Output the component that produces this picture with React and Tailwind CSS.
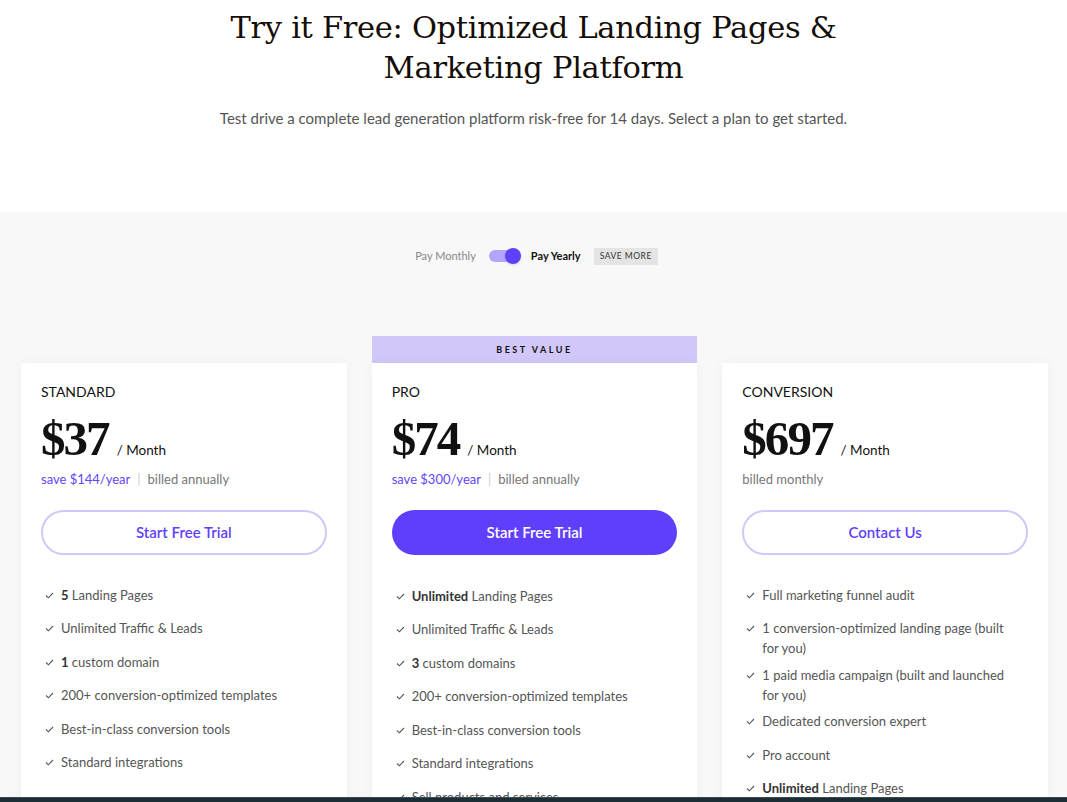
import React from 'react';

const serif = { fontFamily: '"DejaVu Serif", "Liberation Serif", serif' };
const priceSerif = { fontFamily: '"Liberation Serif", "DejaVu Serif", serif' };

const plans = [
  {
    name: 'STANDARD',
    price: '$37',
    save: 'save $144/year',
    billed: 'billed annually',
    cta: 'Start Free Trial',
    features: [
      [<b key="b" className="font-bold text-[#333]">5</b>, ' Landing Pages'],
      ['Unlimited Traffic & Leads'],
      [<b key="b" className="font-bold text-[#333]">1</b>, ' custom domain'],
      ['200+ conversion-optimized templates'],
      ['Best-in-class conversion tools'],
      ['Standard integrations'],
    ],
  },
  {
    name: 'PRO',
    price: '$74',
    save: 'save $300/year',
    billed: 'billed annually',
    cta: 'Start Free Trial',
    best: true,
    features: [
      [<b key="b" className="font-bold text-[#333]">Unlimited</b>, ' Landing Pages'],
      ['Unlimited Traffic & Leads'],
      [<b key="b" className="font-bold text-[#333]">3</b>, ' custom domains'],
      ['200+ conversion-optimized templates'],
      ['Best-in-class conversion tools'],
      ['Standard integrations'],
      ['Sell products and services'],
    ],
  },
  {
    name: 'CONVERSION',
    price: '$697',
    billed: 'billed monthly',
    cta: 'Contact Us',
    features: [
      ['Full marketing funnel audit'],
      ['1 conversion-optimized landing page (built for you)'],
      ['1 paid media campaign (built and launched for you)'],
      ['Dedicated conversion expert'],
      ['Pro account'],
      [<b key="b" className="font-bold text-[#333]">Unlimited</b>, ' Landing Pages'],
    ],
  },
];

function Check() {
  return (
    <svg width="9" height="7" viewBox="0 0 9 7" className="mt-[7px] shrink-0" fill="none">
      <path d="M1 3.5L3.4 5.8L8 1" stroke="#555" strokeWidth="1.1" />
    </svg>
  );
}

function PlanCard({ plan }) {
  return (
    <div className={`flex flex-col ${plan.best ? '' : 'pt-[27px]'}`}>
      {plan.best && (
        <div className="h-[27px] bg-[#d1c7f9] flex items-center justify-center text-[9px] font-bold tracking-[0.28em] text-[#111]">
          BEST VALUE
        </div>
      )}
      <div className="bg-white shadow-[0_0_12px_rgba(0,0,0,0.04)] px-5 pt-[19px] h-[460px]">
        <div className="text-[14px] text-[#111] leading-5">{plan.name}</div>
        <div className="flex items-end mt-[14px] h-[46px]">
          <span style={priceSerif} className="text-[49px] font-bold leading-[46px] tracking-[-0.04em] text-[#111]">
            {plan.price}
          </span>
          <span className="text-[13.5px] text-[#111] ml-2 mb-[2px]">/ Month</span>
        </div>
        <div className="text-[13px] mt-[7px] leading-5 text-[#777]">
          {plan.save && (
            <>
              <span className="text-[#6246f5]">{plan.save}</span>
              <span className="text-[#ccc] mx-[7px]">|</span>
            </>
          )}
          {plan.billed}
        </div>
        <button
          className={`mt-[21px] w-full h-[45px] rounded-full text-[15px] font-semibold ${
            plan.best ? 'bg-[#5f3ffc] text-white' : 'border-2 border-[#d2c8f8] text-[#5f3ffc] bg-white'
          }`}
        >
          {plan.cta}
        </button>
        <ul className={`${plan.best ? 'mt-[31px]' : 'mt-[30px]'} flex flex-col gap-[6.5px] pl-[4px] pr-[18px]`}>
          {plan.features.map((f, i) => (
            <li key={i} className="flex gap-[7px] min-h-[27px] text-[13px] leading-5 text-[#555]">
              <Check />
              <span>{f}</span>
            </li>
          ))}
        </ul>
      </div>
    </div>
  );
}

export default function App() {
  return (
    <div className="h-[802px] overflow-hidden relative bg-[#f8f8f8]" style={{ fontFamily: 'Lato, "Noto Sans", sans-serif' }}>
      <div className="bg-white h-[212px] flex flex-col items-center pt-[8px]">
        <h1 style={serif} className="text-[30.5px] leading-[40px] tracking-[-0.01em] text-[#140d08] text-center w-[640px]">
          Try it Free: Optimized Landing Pages &amp; Marketing Platform
        </h1>
        <p className="mt-[19px] text-[15px] text-[#555]">
          Test drive a complete lead generation platform risk-free for 14 days. Select a plan to get started.
        </p>
      </div>
      <div className="flex items-center justify-center pt-[36px] text-[11px] pl-[6px]">
        <span className="text-[#888]">Pay Monthly</span>
        <div className="ml-[13px] w-[31px] h-[12px] rounded-full bg-[#b2a6fb] relative">
          <div className="absolute right-[-1px] top-[-2px] w-4 h-4 rounded-full bg-[#5f3ffc] shadow" />
        </div>
        <span className="ml-[11px] font-bold text-[#111]">Pay Yearly</span>
        <span className="ml-[13px] bg-[#e4e4e4] px-[6px] py-[2px] text-[8.5px] tracking-[0.06em] text-[#333]">SAVE MORE</span>
      </div>
      <div className="grid grid-cols-3 gap-[25px] px-[21px] mt-[71px] w-[1069px]">
        {plans.map((p) => (
          <PlanCard key={p.name} plan={p} />
        ))}
      </div>
      <div className="absolute left-0 right-0 bottom-0 h-[5px] bg-[#1b2c35] border-t border-[#3b4a52]" />
    </div>
  );
}
